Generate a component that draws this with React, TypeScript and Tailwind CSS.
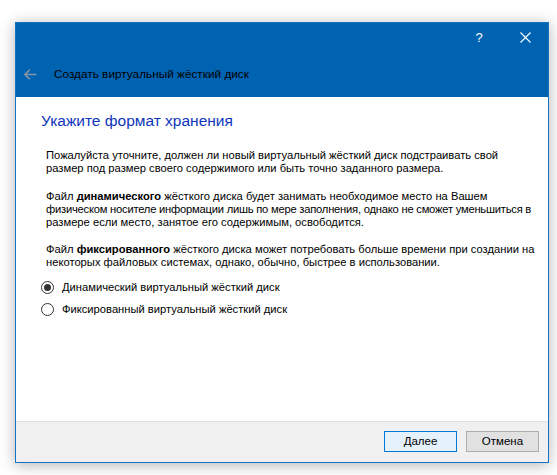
export default function App() {
    return (
        <div className="w-[557px] h-[475px] bg-white pt-[22px] pl-[15px] font-['Liberation_Sans',sans-serif] text-black overflow-hidden">
            <div className="w-[534px] h-[441px] border border-[#1672c4] flex flex-col shadow-[0_2px_14px_rgba(0,0,0,0.3)]">
                {/* header */}
                <div className="bg-[#0063b1] h-[74px] flex flex-col">
                    <div className="h-[29px] flex justify-end">
                        <div className="w-[46px] flex items-center justify-center text-white text-[13px]">?</div>
                        <div className="w-[46px] flex items-center justify-center">
                            <svg width="11" height="11" viewBox="0 0 11 11">
                                <path d="M0.5 0.5 L10.5 10.5 M10.5 0.5 L0.5 10.5" stroke="#ffffff" strokeWidth="1.1" />
                            </svg>
                        </div>
                    </div>
                    <div className="flex-1 flex items-center pl-[8px]">
                        <svg width="13" height="11" viewBox="0 0 13 11">
                            <path d="M1 5.5 H12.5 M5.8 0.8 L1 5.5 L5.8 10.2" stroke="#8494a6" strokeWidth="1.6" fill="none" />
                        </svg>
                        <span className="ml-[17px] text-[11.8px]">Создать виртуальный жёсткий диск</span>
                    </div>
                </div>

                {/* body */}
                <div className="flex-1 bg-white pt-[14px] pl-[25px]">
                    <h1 className="text-[15.5px] leading-[20px] text-[#0d36bd]">Укажите формат хранения</h1>
                    <div className="ml-[5px] mt-[18px] text-[11.2px] leading-[13px] whitespace-nowrap">
                        <p>
                            Пожалуйста уточните, должен ли новый виртуальный жёсткий диск подстраивать свой<br />
                            размер под размер своего содержимого или быть точно заданного размера.
                        </p>
                        <p className="mt-[15px]">
                            Файл <b>динамического</b> жёсткого диска будет занимать необходимое место на Вашем<br />
                            <span className="tracking-[-0.22px]">физическом носителе информации лишь по мере заполнения, однако не сможет уменьшиться в</span><br />
                            размере если место, занятое его содержимым, освободится.
                        </p>
                        <p className="mt-[14px]">
                            Файл <b>фиксированного</b> жёсткого диска может потребовать больше времени при создании на<br />
                            некоторых файловых системах, однако, обычно, быстрее в использовании.
                        </p>
                    </div>
                    <div className="mt-[10px] flex flex-col gap-[6px] text-[11.2px]">
                        <label className="h-[16px] flex items-center">
                            <span className="w-[13px] h-[13px] rounded-full border border-[#333333] flex items-center justify-center bg-white">
                                <span className="w-[7px] h-[7px] rounded-full bg-[#333333]" />
                            </span>
                            <span className="ml-[8px]">Динамический виртуальный жёсткий диск</span>
                        </label>
                        <label className="h-[16px] flex items-center">
                            <span className="w-[13px] h-[13px] rounded-full border border-[#333333] bg-white" />
                            <span className="ml-[8px]">Фиксированный виртуальный жёсткий диск</span>
                        </label>
                    </div>
                </div>

                {/* footer */}
                <div className="h-[41px] bg-[#f0f0f0] border-t border-[#dfdfdf] flex justify-end items-start pt-[9px] pr-[9px] gap-[9px] text-[11.5px] font-normal">
                    <button className="w-[73px] h-[21px] border border-[#0078d7] bg-[#e5f1fb] flex items-center justify-center font-normal">Далее</button>
                    <button className="w-[73px] h-[21px] border border-[#adadad] bg-[#e1e1e1] flex items-center justify-center font-normal">Отмена</button>
                </div>
            </div>
        </div>
    );
}
